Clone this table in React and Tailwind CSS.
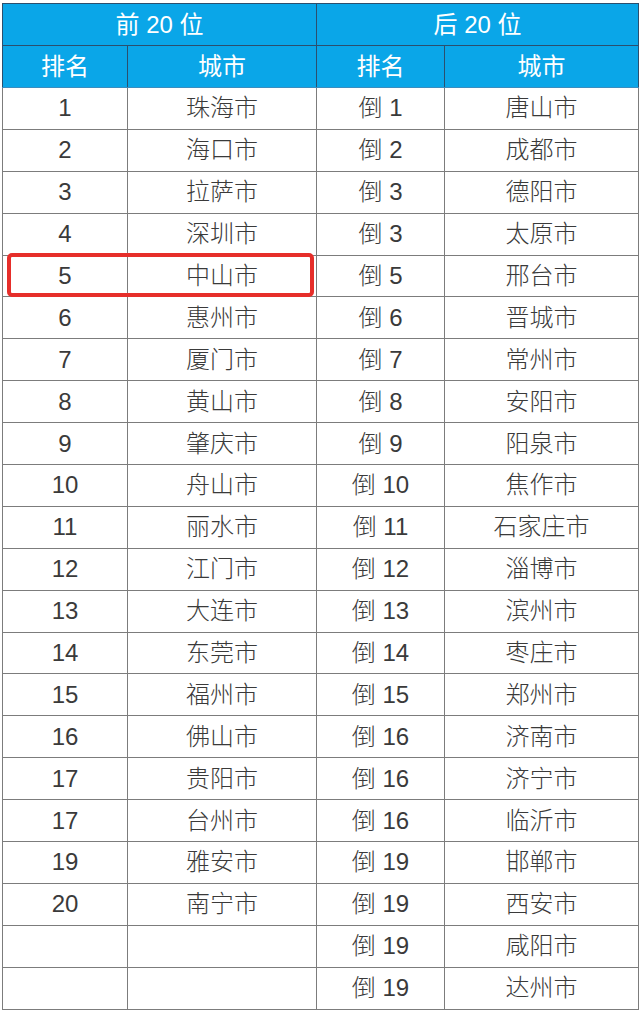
import React from "react";

const left = [
  ["1", "珠海市"], ["2", "海口市"], ["3", "拉萨市"], ["4", "深圳市"], ["5", "中山市"],
  ["6", "惠州市"], ["7", "厦门市"], ["8", "黄山市"], ["9", "肇庆市"], ["10", "舟山市"],
  ["11", "丽水市"], ["12", "江门市"], ["13", "大连市"], ["14", "东莞市"], ["15", "福州市"],
  ["16", "佛山市"], ["17", "贵阳市"], ["17", "台州市"], ["19", "雅安市"], ["20", "南宁市"],
  ["", ""], ["", ""],
];

const right = [
  ["倒 1", "唐山市"], ["倒 2", "成都市"], ["倒 3", "德阳市"], ["倒 3", "太原市"], ["倒 5", "邢台市"],
  ["倒 6", "晋城市"], ["倒 7", "常州市"], ["倒 8", "安阳市"], ["倒 9", "阳泉市"], ["倒 10", "焦作市"],
  ["倒 11", "石家庄市"], ["倒 12", "淄博市"], ["倒 13", "滨州市"], ["倒 14", "枣庄市"], ["倒 15", "郑州市"],
  ["倒 16", "济南市"], ["倒 16", "济宁市"], ["倒 16", "临沂市"], ["倒 19", "邯郸市"], ["倒 19", "西安市"],
  ["倒 19", "咸阳市"], ["倒 19", "达州市"],
];

export default function App() {
  return (
    <div className="w-[640px] h-[1017px] bg-white pt-[3px] pl-[2px] font-['Liberation_Sans','Noto_Sans_CJK_SC',sans-serif]">
      <div className="relative w-[636px]">
        <table className="w-[636px] border-collapse table-fixed">
          <colgroup>
            <col className="w-[125px]" />
            <col className="w-[189px]" />
            <col className="w-[128px]" />
            <col className="w-[194px]" />
          </colgroup>
          <thead>
            <tr className="h-[42px] bg-[#0aa6e8] text-white text-[24px]">
              <th colSpan={2} className="border border-[#2b4f6e] font-normal p-0">前 20 位</th>
              <th colSpan={2} className="border border-[#2b4f6e] font-normal p-0">后 20 位</th>
            </tr>
            <tr className="h-[42px] bg-[#0aa6e8] text-white text-[24px]">
              <th className="border border-[#2b4f6e] border-b-[#3b8dbf] font-normal p-0">排名</th>
              <th className="border border-[#2b4f6e] border-b-[#3b8dbf] font-normal p-0">城市</th>
              <th className="border border-[#2b4f6e] border-b-[#3b8dbf] font-normal p-0">排名</th>
              <th className="border border-[#2b4f6e] border-b-[#3b8dbf] font-normal p-0">城市</th>
            </tr>
          </thead>
          <tbody>
            {left.map((l, i) => (
              <tr key={i} className="h-[41.9px] text-[24px] text-[#3a3a3a] font-light">
                <td className="border border-[#7c7c7c] text-center p-0">{l[0]}</td>
                <td className="border border-[#7c7c7c] text-center p-0">{l[1]}</td>
                <td className="border border-[#7c7c7c] text-center p-0">{right[i][0]}</td>
                <td className="border border-[#7c7c7c] text-center p-0">{right[i][1]}</td>
              </tr>
            ))}
          </tbody>
        </table>
        {/* highlight on row 5 */}
        <div className="absolute left-[5px] top-[250px] w-[307px] h-[44px] border-4 border-[#e62e2a] rounded-[5px]"></div>
      </div>
    </div>
  );
}
